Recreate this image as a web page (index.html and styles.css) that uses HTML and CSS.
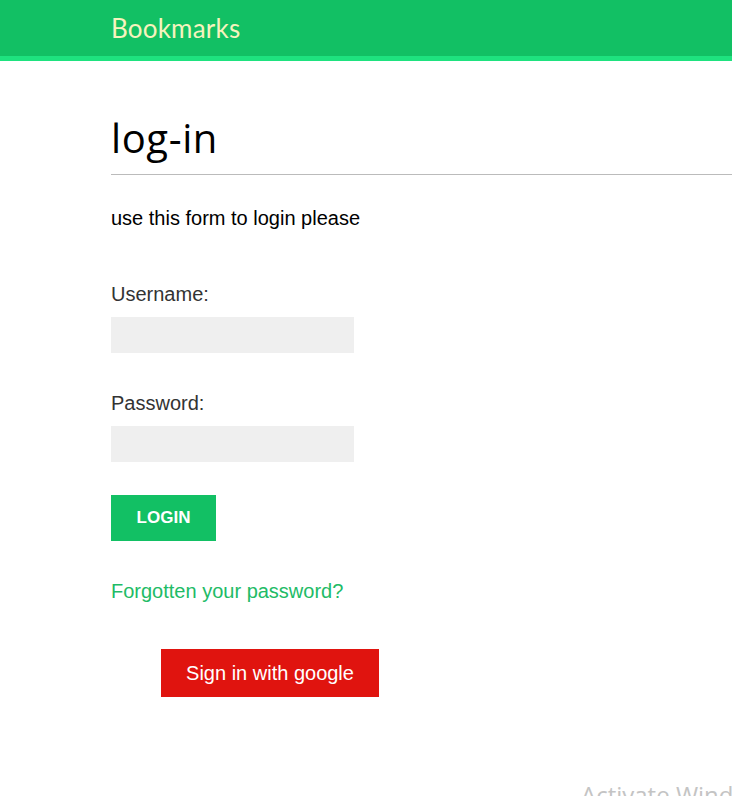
FILE: index.html
```html
<!DOCTYPE html>
<html lang="en">
<head>
<meta charset="utf-8">
<title>log-in</title>
<link rel="stylesheet" href="styles.css">
</head>
<body>
<header class="topbar">
  <span class="logo">Bookmarks</span>
</header>
<main class="content">
  <h1 class="title">log-in</h1>
  <p class="intro">use this form to login please</p>
  <form class="login-form">
    <label class="field-label" for="username">Username:</label>
    <input class="field-input" id="username" type="text">
    <label class="field-label pw" for="password">Password:</label>
    <input class="field-input" id="password" type="password">
    <button class="login-btn" type="button">LOGIN</button>
  </form>
  <a class="forgot" href="#">Forgotten your password?</a>
  <a class="google-btn" href="#">Sign in with google</a>
</main>
<div class="watermark">Activate Windows</div>
</body>
</html>
```
FILE: styles.css
```css
html, body {
  margin: 0;
  padding: 0;
  background: #fff;
  overflow: hidden;
}
body {
  font-family: "Liberation Sans", Arial, sans-serif;
  height: 796px;
  position: relative;
}
.topbar {
  height: 56px;
  background: #12c064;
  border-bottom: 5px solid #1ee27f;
  padding-left: 111px;
  display: flex;
  align-items: flex-start;
}
.logo {
  font-family: Lato, sans-serif;
  font-size: 26px;
  line-height: 56px;
  color: #f6f3be;
  letter-spacing: 0.2px;
}
.content {
  padding-left: 111px;
  display: flex;
  flex-direction: column;
  align-items: flex-start;
}
.title {
  align-self: stretch;
  margin: 53px 0 0 0;
  font-family: "Open Sans", sans-serif;
  font-weight: 400;
  font-size: 40px;
  line-height: 48px;
  letter-spacing: 0.6px;
  color: #000;
  padding-bottom: 12px;
  border-bottom: 1px solid #bbb;
}
.intro {
  margin: 32px 0 0 0;
  font-size: 20px;
  line-height: 23px;
  color: #000;
}
.login-form {
  display: flex;
  flex-direction: column;
  align-items: flex-start;
  margin: 0;
}
.field-label {
  margin-top: 53px;
  font-size: 20px;
  line-height: 23px;
  color: #333;
}
.field-label.pw {
  margin-top: 39px;
}
.field-input {
  margin-top: 11px;
  width: 243px;
  height: 36px;
  box-sizing: border-box;
  border: none;
  background: #efefef;
  padding: 0 8px;
  font-size: 18px;
}
.login-btn {
  margin-top: 33px;
  width: 105px;
  height: 46px;
  border: none;
  background: #12c064;
  color: #fff;
  font-family: "Liberation Sans", Arial, sans-serif;
  font-weight: 700;
  font-size: 17px;
  padding: 0;
}
.forgot {
  margin-top: 39px;
  font-size: 20px;
  line-height: 23px;
  color: #21bb66;
  text-decoration: none;
}
.google-btn {
  margin: 46px 0 0 50px;
  width: 218px;
  height: 48px;
  display: flex;
  align-items: center;
  justify-content: center;
  background: #e0140f;
  color: #fff;
  font-size: 20px;
  text-decoration: none;
}
.watermark {
  position: absolute;
  left: 581px;
  top: 783px;
  font-family: "Open Sans", sans-serif;
  font-size: 24px;
  line-height: 24px;
  color: #c4c4c4;
  white-space: nowrap;
}
```
